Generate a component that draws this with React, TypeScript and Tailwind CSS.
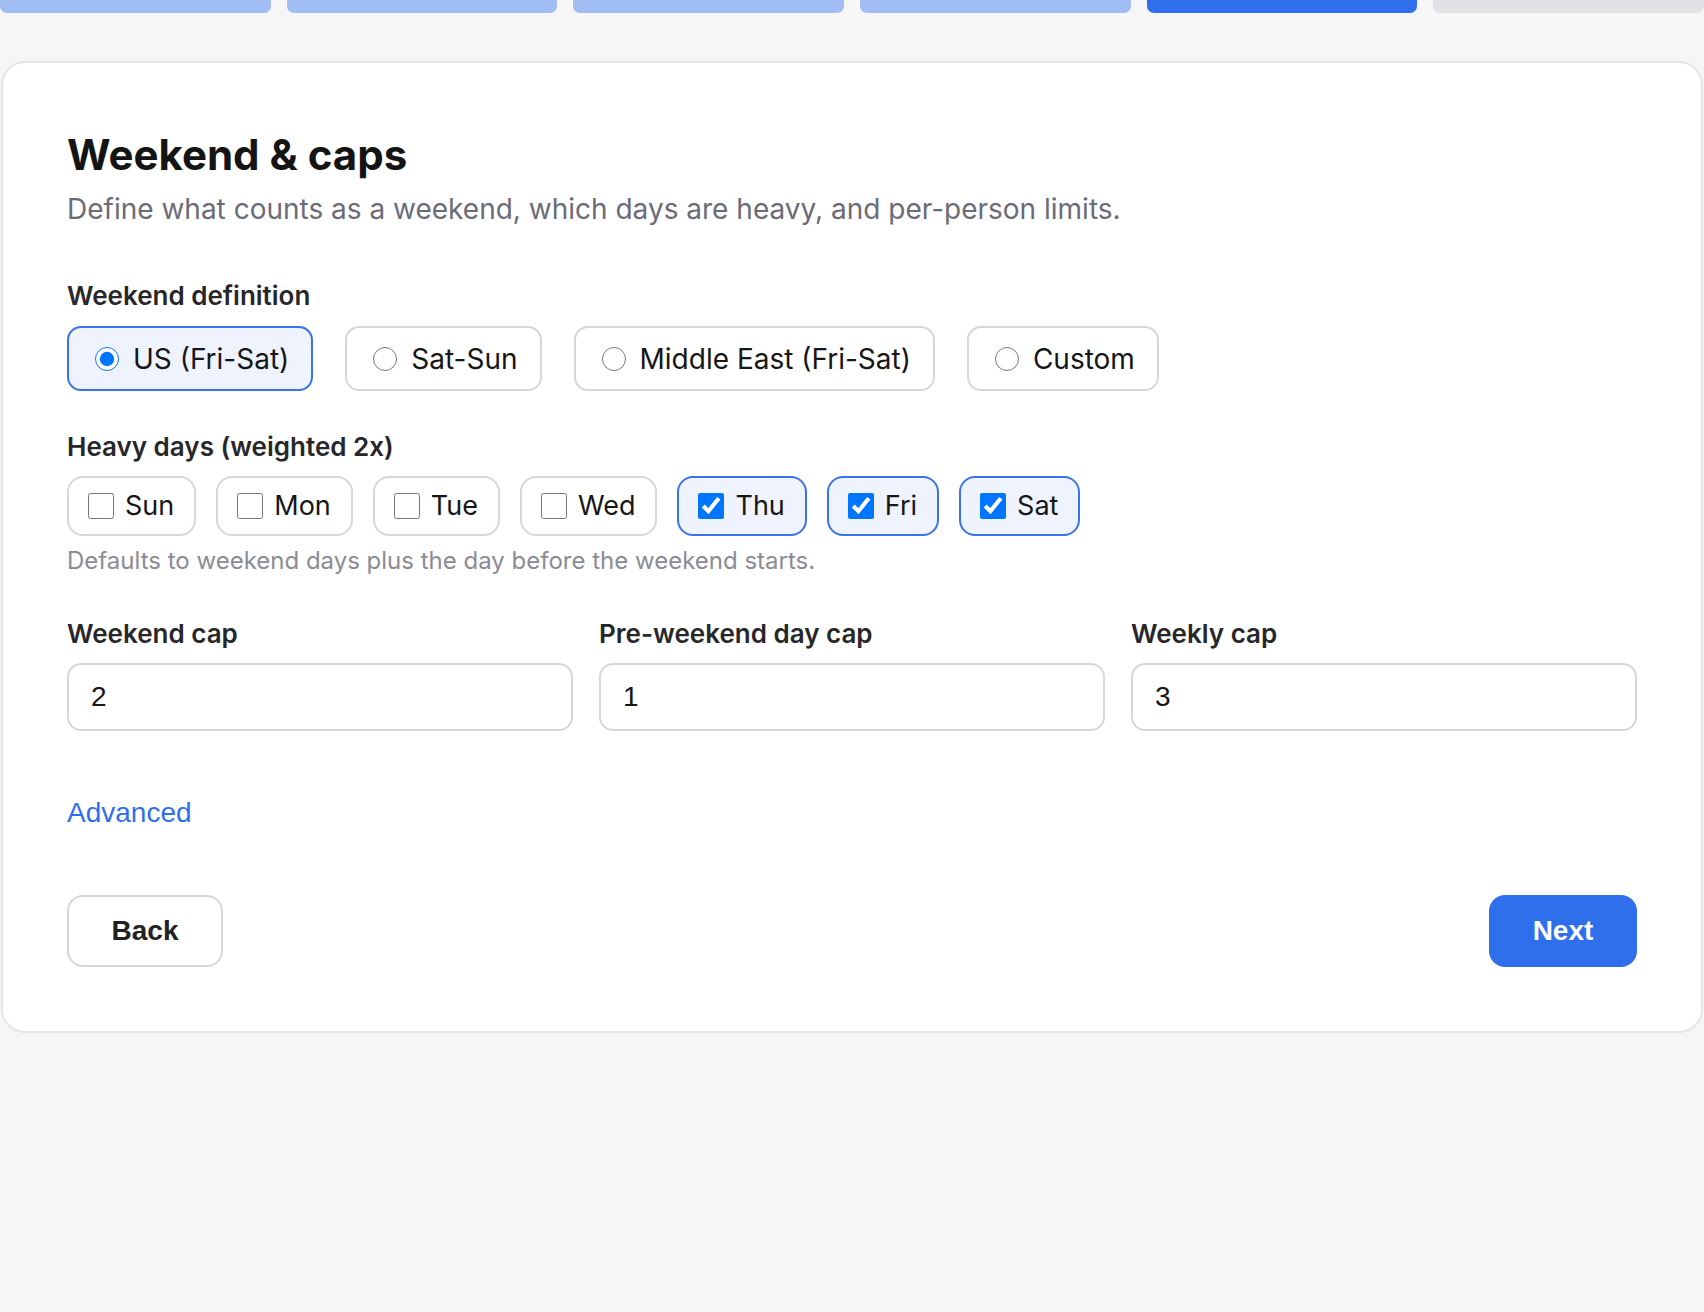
import { useState } from 'react'

// Шаг мастера: выходные дни, тяжёлые дни и лимиты на человека.

const steps = ['done', 'done', 'done', 'done', 'current', 'todo'] as const

const weekendOptions = ['US (Fri-Sat)', 'Sat-Sun', 'Middle East (Fri-Sat)', 'Custom']

const days = ['Sun', 'Mon', 'Tue', 'Wed', 'Thu', 'Fri', 'Sat']

const arial = "font-['Liberation_Sans',Arial,sans-serif]"

export default function App() {
  const [weekend, setWeekend] = useState('US (Fri-Sat)')
  const [heavy, setHeavy] = useState<string[]>(['Thu', 'Fri', 'Sat'])
  const [caps, setCaps] = useState({ weekend: '2', preWeekend: '1', weekly: '3' })

  const toggleDay = (d: string) =>
    setHeavy((prev) => (prev.includes(d) ? prev.filter((x) => x !== d) : [...prev, d]))

  return (
    <div className="min-h-screen bg-[#f6f6f6] font-['Inter',sans-serif] text-[#27272a]">
      {/* Progress */}
      <div className="flex gap-4">
        {steps.map((s, i) => (
          <div
            key={i}
            className={`h-[13px] flex-1 rounded-b-[7px] ${
              s === 'current' ? 'bg-[#2f6fec]' : s === 'done' ? 'bg-[#a1bef4]' : 'bg-[#e1e1e6]'
            }`}
          />
        ))}
      </div>

      {/* Card */}
      <div className="mx-px mt-12 rounded-3xl border-2 border-[#e4e4e9] bg-white p-16">
        <h1 className="text-[42px] font-bold leading-[56px] text-[#141414]">Weekend &amp; caps</h1>
        <p className="mt-[5px] text-[28px] leading-[42px] text-[#6b6b78]">
          Define what counts as a weekend, which days are heavy, and per-person limits.
        </p>

        {/* Weekend definition */}
        <h2 className="mt-[46px] text-[26px] font-semibold leading-[39px]">Weekend definition</h2>
        <div className="mt-[11px] flex gap-8">
          {weekendOptions.map((opt) => {
            const active = weekend === opt
            return (
              <label
                key={opt}
                className={`flex h-[65px] cursor-pointer items-center gap-[14px] rounded-[14px] border-2 pl-[26px] pr-[22px] text-[28px] text-[#161616] ${
                  active ? 'border-[#3b74ea] bg-[#eef3fe]' : 'border-[#d6d6db] bg-white'
                }`}
              >
                <input
                  type="radio"
                  name="weekend"
                  className="m-0 h-6 w-6"
                  checked={active}
                  onChange={() => setWeekend(opt)}
                />
                {opt}
              </label>
            )
          })}
        </div>

        {/* Heavy days */}
        <h2 className="mt-9 text-[26px] font-semibold leading-[39px]">Heavy days (weighted 2x)</h2>
        <div className="mt-[10px] flex gap-5">
          {days.map((d) => {
            const on = heavy.includes(d)
            return (
              <label
                key={d}
                className={`flex h-[60px] cursor-pointer items-center gap-[11px] rounded-2xl border-2 pl-[19px] pr-[20px] text-[27px] text-[#161616] ${
                  on ? 'border-[#3b74ea] bg-[#eef3fe]' : 'border-[#d6d6db] bg-white'
                }`}
              >
                <input
                  type="checkbox"
                  className="m-0 h-[26px] w-[26px]"
                  checked={on}
                  onChange={() => toggleDay(d)}
                />
                {d}
              </label>
            )
          })}
        </div>
        <p className="mt-[7px] text-[24px] leading-[36px] text-[#8b8b95]">
          Defaults to weekend days plus the day before the weekend starts.
        </p>

        {/* Caps */}
        <div className="mt-[35px] grid grid-cols-3 gap-[26px]">
          {(
            [
              ['weekend', 'Weekend cap'],
              ['preWeekend', 'Pre-weekend day cap'],
              ['weekly', 'Weekly cap'],
            ] as const
          ).map(([key, label]) => (
            <div key={key}>
              <p className="text-[26px] font-semibold leading-[39px]">{label}</p>
              <input
                className={`mt-[10px] h-[68px] w-full rounded-[14px] border-2 border-[#d6d6db] bg-white px-[22px] text-[28px] text-[#161616] outline-none ${arial}`}
                value={caps[key]}
                onChange={(e) => setCaps({ ...caps, [key]: e.target.value })}
              />
            </div>
          ))}
        </div>

        <button className={`mt-[66px] block text-[28px] leading-[32px] text-[#2f6fec] ${arial}`}>
          Advanced
        </button>

        {/* Footer */}
        <div className="mt-[66px] flex justify-between">
          <button
            className={`h-[72px] w-[156px] rounded-2xl border-2 border-[#d6d6db] bg-white text-[28px] font-bold text-[#222] ${arial}`}
          >
            Back
          </button>
          <button
            className={`h-[72px] w-[148px] rounded-2xl bg-[#2f6fec] text-[28px] font-bold text-white ${arial}`}
          >
            Next
          </button>
        </div>
      </div>
    </div>
  )
}
